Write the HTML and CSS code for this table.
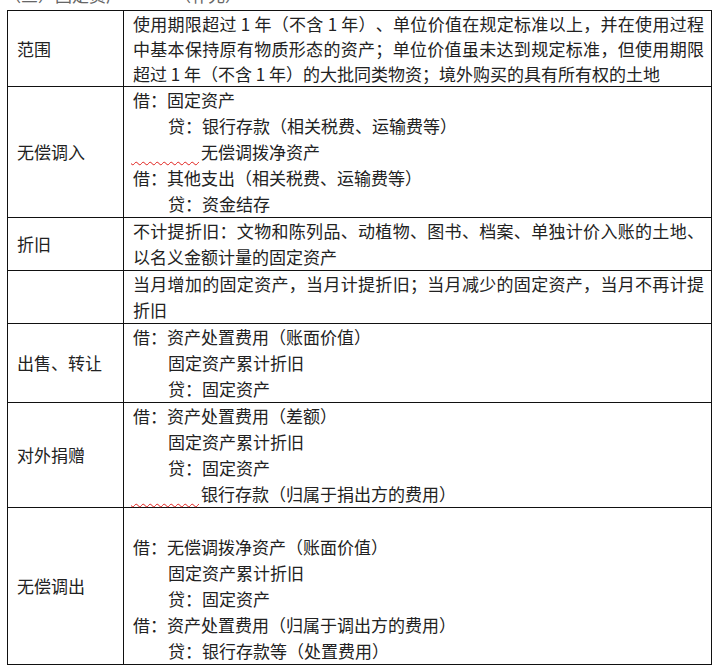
FILE: index.html
```html
<!DOCTYPE html>
<html lang="zh-CN">
<head>
<meta charset="utf-8">
<title>固定资产</title>
<link rel="stylesheet" href="styles.css">
</head>
<body>
<div class="page">
  <div class="clip"><p class="cut">（三）固定资产　　　（补充）</p></div>
  <table class="grid">
    <colgroup><col class="c1"><col class="c2"></colgroup>
    <tr class="r1">
      <td class="key">范围</td>
      <td class="val just">使用期限超过 1 年（不含 1 年）、单位价值在规定标准以上，并在使用过程中基本保持原有物质形态的资产；单位价值虽未达到规定标准，但使用期限超过 1 年（不含 1 年）的大批同类物资；境外购买的具有所有权的土地</td>
    </tr>
    <tr>
      <td class="key">无偿调入</td>
      <td class="val">
        <div>借：固定资产</div>
        <div class="i2">贷：银行存款（相关税费、运输费等）</div>
        <div class="sq-line"><span class="squiggle">　　　　</span>无偿调拨净资产</div>
        <div>借：其他支出（相关税费、运输费等）</div>
        <div class="i2">贷：资金结存</div>
      </td>
    </tr>
    <tr>
      <td class="key">折旧</td>
      <td class="val just">不计提折旧：文物和陈列品、动植物、图书、档案、单独计价入账的土地、以名义金额计量的固定资产</td>
    </tr>
    <tr>
      <td class="key"></td>
      <td class="val just">当月增加的固定资产，当月计提折旧；当月减少的固定资产，当月不再计提折旧</td>
    </tr>
    <tr>
      <td class="key">出售、转让</td>
      <td class="val">
        <div>借：资产处置费用（账面价值）</div>
        <div class="i2">固定资产累计折旧</div>
        <div class="i2">贷：固定资产</div>
      </td>
    </tr>
    <tr>
      <td class="key">对外捐赠</td>
      <td class="val">
        <div>借：资产处置费用（差额）</div>
        <div class="i2">固定资产累计折旧</div>
        <div class="i2">贷：固定资产</div>
        <div class="sq-line"><span class="squiggle">　　　　</span>银行存款（归属于捐出方的费用）</div>
      </td>
    </tr>
    <tr>
      <td class="key">无偿调出</td>
      <td class="val">
        <div class="blank">&nbsp;</div>
        <div>借：无偿调拨净资产（账面价值）</div>
        <div class="i2">固定资产累计折旧</div>
        <div class="i2">贷：固定资产</div>
        <div>借：资产处置费用（归属于调出方的费用）</div>
        <div class="i2">贷：银行存款等（处置费用）</div>
      </td>
    </tr>
  </table>
</div>
</body>
</html>
```

FILE: styles.css
```css
html, body {
  margin: 0;
  padding: 0;
  background: #ffffff;
}

body {
  font-family: "Noto Sans CJK SC", "Noto Sans", sans-serif;
  color: #222222;
  font-size: 17px;
  text-spacing-trim: space-all;
}

.page {
  width: 718px;
  height: 672px;
  overflow: hidden;
}

.clip {
  height: 9px;
  overflow: hidden;
  padding-left: 4px;
}

.cut {
  margin: -15px 0 0;
  font-size: 17px;
  line-height: 20px;
  color: #666666;
  white-space: nowrap;
}

.grid {
  margin-top: 1px;
  margin-left: 7px;
  border-collapse: collapse;
  width: 705px;
  table-layout: fixed;
}

.c1 {
  width: 116px;
}

.grid td {
  border: 1px solid #111111;
  padding: 0;
  line-height: 26px;
}

.grid .key {
  vertical-align: middle;
  padding-left: 9px;
}

.grid .val {
  vertical-align: top;
  padding-left: 9px;
  padding-right: 7px;
}

.grid .r1 td {
  line-height: 25px;
}

.just {
  text-align: justify;
}

.i2 {
  padding-left: 35px;
}

.sq-line {
  margin-left: -2px;
}

.squiggle {
  padding-right: 2px;
  text-decoration: underline wavy #e0201c;
  text-decoration-thickness: 1.4px;
  text-decoration-skip-ink: none;
  text-underline-offset: 2px;
}
```
